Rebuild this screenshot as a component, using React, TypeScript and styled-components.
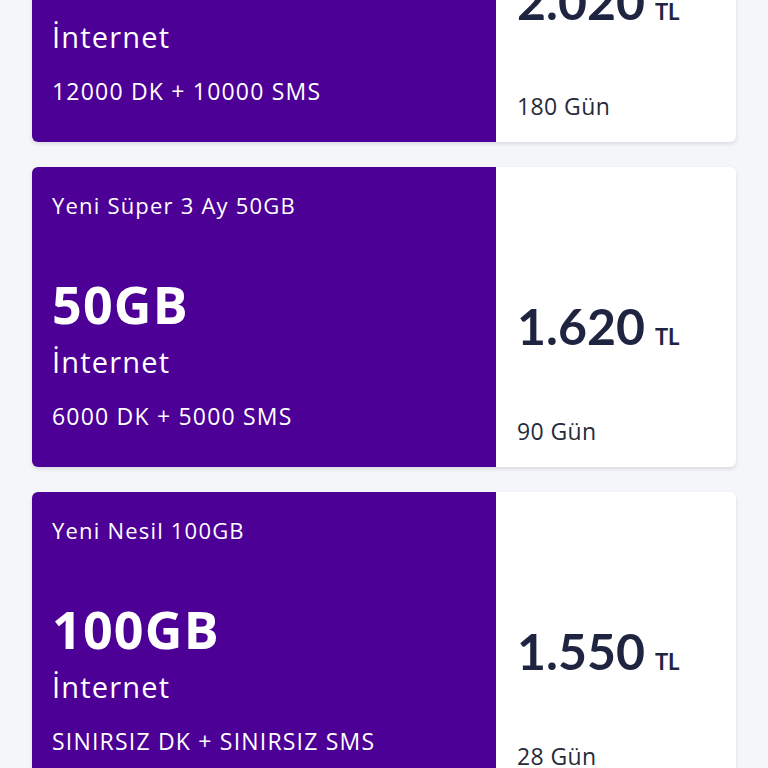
import React from "react";
import styled, { createGlobalStyle } from "styled-components";

const Global = createGlobalStyle`
  html, body { margin: 0; padding: 0; background: #f5f6f9; }
  body { font-family: "Open Sans", "Noto Sans", sans-serif; overflow: hidden; }
`;

const List = styled.div`
  display: flex;
  flex-direction: column;
  gap: 25px;
  padding: 0 32px;
  margin-top: -158px;
`;

const Card = styled.div`
  display: grid;
  grid-template-columns: 464px 1fr;
  height: 300px;
  border-radius: 6px;
  overflow: hidden;
  background: #ffffff;
  box-shadow: 0 2px 4px rgba(20, 20, 60, 0.12);
`;

const Info = styled.div`
  background: #4c0096;
  color: #ffffff;
  padding: 25px 20px 0;
  display: flex;
  flex-direction: column;
  white-space: nowrap;
`;

const Title = styled.div`
  font-size: 22px;
  line-height: 26px;
  letter-spacing: 1.2px;
`;

const Data = styled.div`
  margin-top: 61px;
  font-size: 52px;
  line-height: 50px;
  font-weight: 700;
  letter-spacing: 1.2px;
`;

const Label = styled.div`
  margin-top: 16px;
  font-size: 29px;
  line-height: 34px;
  letter-spacing: 1.2px;
`;

const Extras = styled.div`
  margin-top: 23px;
  font-size: 23px;
  line-height: 28px;
  letter-spacing: 1.2px;
`;

const PricePane = styled.div`
  padding: 135px 20px 0 21px;
  display: flex;
  flex-direction: column;
  color: #1f2541;
`;

const Price = styled.div`
  font-family: Lato, sans-serif;
  font-size: 50px;
  line-height: 48px;
  font-weight: 700;
  white-space: nowrap;
`;

const Currency = styled.span`
  font-size: 22px;
  font-weight: 700;
  margin-left: 10px;
`;

const Days = styled.div`
  margin-top: 56px;
  font-size: 23px;
  line-height: 28px;
  letter-spacing: 0.4px;
  color: #262b3a;
`;

type Plan = {
  title: string;
  data: string;
  extras: string;
  price: string;
  days: string;
};

const plans: Plan[] = [
  { title: "Yeni Süper 6 Ay 70GB", data: "70GB", extras: "12000 DK + 10000 SMS", price: "2.020", days: "180 Gün" },
  { title: "Yeni Süper 3 Ay 50GB", data: "50GB", extras: "6000 DK + 5000 SMS", price: "1.620", days: "90 Gün" },
  { title: "Yeni Nesil 100GB", data: "100GB", extras: "SINIRSIZ DK + SINIRSIZ SMS", price: "1.550", days: "28 Gün" },
];

export default function App() {
  return (
    <>
      <Global />
      <List>
        {plans.map((p) => (
          <Card key={p.title}>
            <Info>
              <Title>{p.title}</Title>
              <Data>{p.data}</Data>
              <Label>İnternet</Label>
              <Extras>{p.extras}</Extras>
            </Info>
            <PricePane>
              <Price>
                {p.price}
                <Currency>TL</Currency>
              </Price>
              <Days>{p.days}</Days>
            </PricePane>
          </Card>
        ))}
      </List>
    </>
  );
}
